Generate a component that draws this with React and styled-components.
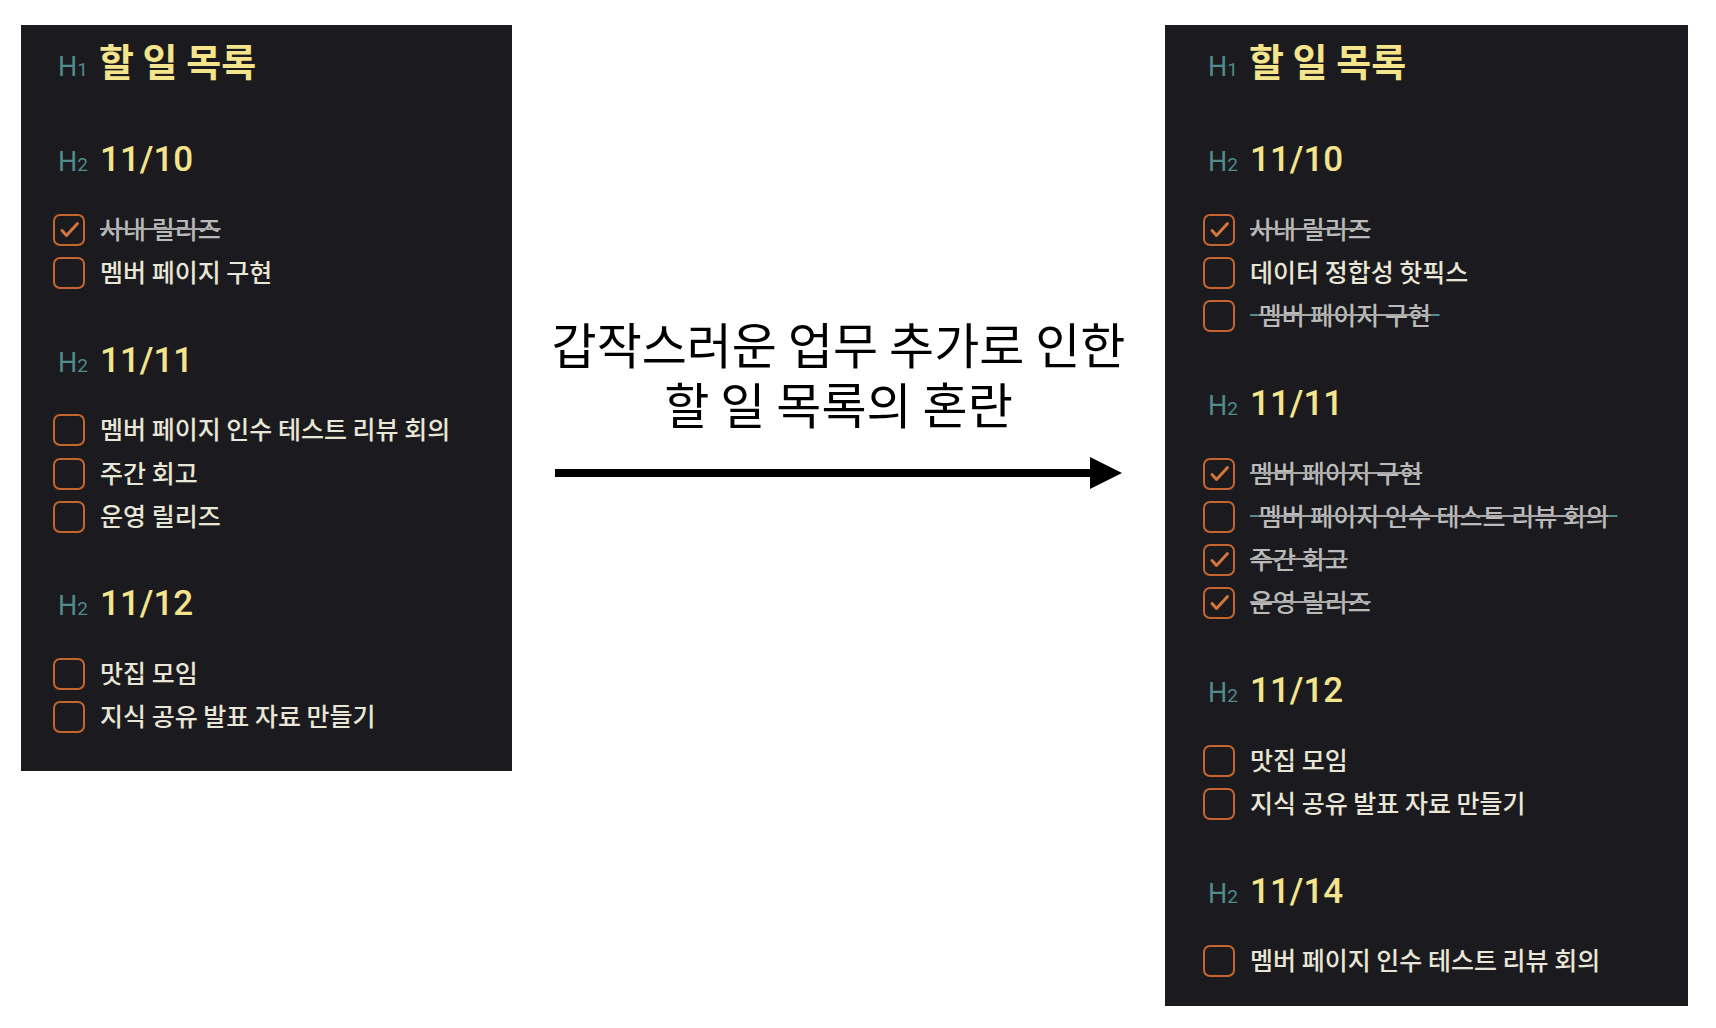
import React from 'react';
import styled, { createGlobalStyle } from 'styled-components';

const leftDays = [
  {
    date: '11/10',
    items: [{ text: '사내 릴리즈', done: true }, { text: '멤버 페이지 구현' }],
  },
  {
    date: '11/11',
    items: [
      { text: '멤버 페이지 인수 테스트 리뷰 회의' },
      { text: '주간 회고' },
      { text: '운영 릴리즈' },
    ],
  },
  {
    date: '11/12',
    items: [{ text: '맛집 모임' }, { text: '지식 공유 발표 자료 만들기' }],
  },
];

const rightDays = [
  {
    date: '11/10',
    items: [
      { text: '사내 릴리즈', done: true },
      { text: '데이터 정합성 핫픽스' },
      { text: '멤버 페이지 구현', moved: true },
    ],
  },
  {
    date: '11/11',
    items: [
      { text: '멤버 페이지 구현', done: true },
      { text: '멤버 페이지 인수 테스트 리뷰 회의', moved: true },
      { text: '주간 회고', done: true },
      { text: '운영 릴리즈', done: true },
    ],
  },
  {
    date: '11/12',
    items: [{ text: '맛집 모임' }, { text: '지식 공유 발표 자료 만들기' }],
  },
  {
    date: '11/14',
    items: [{ text: '멤버 페이지 인수 테스트 리뷰 회의' }],
  },
];

function Check({ checked }) {
  return (
    <Box>
      {checked && (
        <svg width="32" height="32" viewBox="0 0 32 32">
          <path
            d="M9 16.5 L13.5 21.5 L24.5 9.5"
            fill="none"
            stroke="#d2763c"
            strokeWidth="3"
            strokeLinecap="round"
            strokeLinejoin="round"
          />
        </svg>
      )}
    </Box>
  );
}

function TodoList({ days, inset, width, bottom }) {
  return (
    <Panel $inset={inset} $width={width} $bottom={bottom}>
      <Title>
        <Mark $big>
          H<Sub>1</Sub>
        </Mark>
        할 일 목록
      </Title>
      {days.map((day) => (
        <Day key={day.date}>
          <DateHead>
            <Mark>
              H<Sub>2</Sub>
            </Mark>
            {day.date}
          </DateHead>
          {day.items.map((item, i) => (
            <Row key={i}>
              <Check checked={item.done} />
              {item.moved ? (
                <Moved>
                  <Done>{item.text}</Done>
                </Moved>
              ) : (
                <Task $done={item.done}>{item.text}</Task>
              )}
            </Row>
          ))}
        </Day>
      ))}
    </Panel>
  );
}

function Arrow() {
  return (
    <svg width="567" height="32" viewBox="0 0 567 32">
      <rect x="0" y="12" width="540" height="8" fill="#000" />
      <polygon points="535,0 567,16 535,32" fill="#000" />
    </svg>
  );
}

export default function App() {
  return (
    <>
      <GlobalStyle />
      <Page>
        <TodoList days={leftDays} inset={32} width={491} bottom={32} />
        <Middle>
          <Caption>
            <Line>갑작스러운 업무 추가로 인한</Line>
            <Line>할 일 목록의 혼란</Line>
          </Caption>
          <Arrow />
        </Middle>
        <TodoList days={rightDays} inset={38} width={523} bottom={23} />
      </Page>
    </>
  );
}

const GlobalStyle = createGlobalStyle`
  html, body {
    margin: 0;
    background: #ffffff;
  }
  body {
    font-family: "Noto Sans CJK KR", "Noto Sans", sans-serif;
  }
`;

const Page = styled.div`
  display: flex;
  align-items: flex-start;
  padding: 25px 0 0 21px;
  width: 1716px;
  height: 1028px;
  box-sizing: border-box;
`;

const Panel = styled.section`
  flex: none;
  width: ${(p) => p.$width}px;
  box-sizing: border-box;
  background: #1b1a1f;
  padding: 10px 0 ${(p) => p.$bottom}px ${(p) => p.$inset}px;
  font-family: Roboto, "Noto Sans CJK KR", sans-serif;
`;

const Title = styled.div`
  height: 50px;
  line-height: 50px;
  padding-left: 5px;
  font-family: "Noto Sans CJK KR", sans-serif;
  font-size: 38px;
  font-weight: 700;
  color: #f4e58c;
  white-space: nowrap;
`;

const Mark = styled.span`
  display: inline-block;
  width: ${(p) => (p.$big ? 41 : 42)}px;
  font-family: Roboto, sans-serif;
  font-size: 27px;
  font-weight: 400;
  color: #4f8c8b;
  line-height: 1;
`;

const Sub = styled.span`
  font-size: 19px;
`;

const Day = styled.section`
  margin-top: 43px;
  &:first-of-type {
    margin-top: 52px;
  }
`;

const DateHead = styled.div`
  height: 44px;
  line-height: 44px;
  padding: 1px 0 0 5px;
  margin-bottom: 26px;
  font-family: Roboto, sans-serif;
  font-size: 35px;
  font-weight: 500;
  color: #f4e58c;
`;

const Row = styled.div`
  display: flex;
  align-items: center;
  gap: 15px;
  height: 43.3px;
`;

const Box = styled.span`
  flex: none;
  width: 32px;
  height: 32px;
  box-sizing: border-box;
  border: 2px solid #c4652f;
  border-radius: 7px;
  display: flex;
  align-items: center;
  justify-content: center;
  svg {
    margin: -2px;
  }
`;

const Task = styled.span`
  font-family: "Noto Sans CJK KR", sans-serif;
  font-size: 25px;
  font-weight: 500;
  white-space: nowrap;
  padding-bottom: 4px;
  color: ${(p) => (p.$done ? '#bababa' : '#e8e6d6')};
  text-decoration: ${(p) => (p.$done ? 'line-through' : 'none')};
  text-decoration-color: #a8a8a8;
  text-decoration-thickness: 2px;
`;

const Done = styled.span`
  color: #bababa;
  text-decoration: line-through;
  text-decoration-color: #a8a8a8;
  text-decoration-thickness: 2px;
`;

const Moved = styled.span`
  font-family: "Noto Sans CJK KR", sans-serif;
  font-size: 25px;
  font-weight: 500;
  white-space: pre;
  padding-bottom: 4px;
  &::before,
  &::after {
    content: '\\00a0';
    letter-spacing: 3px;
    text-decoration: line-through;
    text-decoration-color: #4f8c8b;
    text-decoration-thickness: 2px;
  }
`;

const Middle = styled.div`
  flex: none;
  width: 653px;
  padding-top: 288px;
  display: flex;
  flex-direction: column;
  align-items: center;
  gap: 24px;
`;

const Caption = styled.div`
  display: flex;
  flex-direction: column;
  align-items: center;
  font-family: "Noto Sans CJK KR", sans-serif;
  font-size: 49px;
  font-weight: 400;
  color: #000000;
  white-space: nowrap;
`;

const Line = styled.div`
  height: 60px;
  line-height: 60px;
`;
